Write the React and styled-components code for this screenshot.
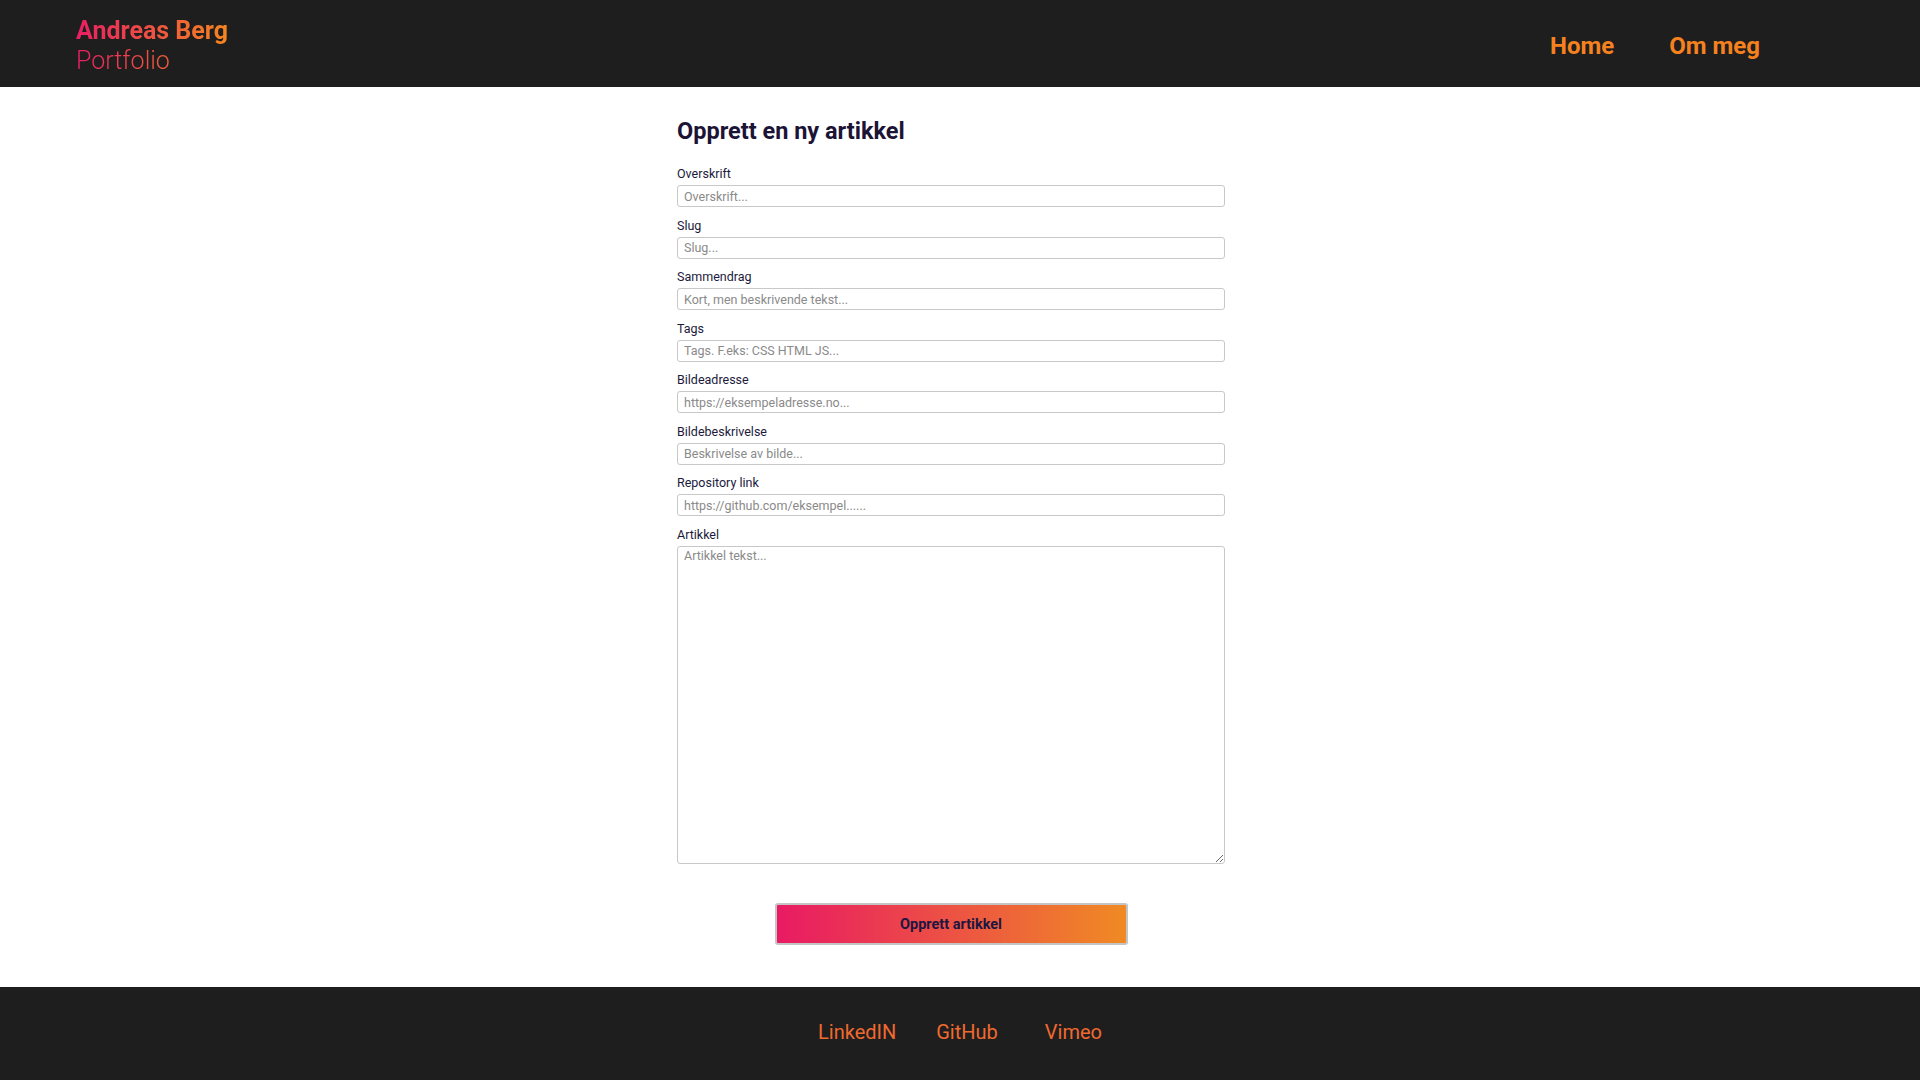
import React from "react";
import styled, { createGlobalStyle } from "styled-components";

const GlobalStyle = createGlobalStyle`
  html, body { margin: 0; padding: 0; background: #ffffff; }
  body { font-family: Roboto, "Liberation Sans", Arial, sans-serif; }
  * { box-sizing: border-box; }
`;

const Page = styled.div`
  min-height: 100vh;
  display: flex;
  flex-direction: column;
`;

const Header = styled.header`
  height: 87px;
  background: #1e1e1e;
  display: flex;
  align-items: flex-start;
  justify-content: space-between;
  padding: 0 160px 0 76px;
`;

const Brand = styled.a`
  display: inline-flex;
  flex-direction: column;
  margin-top: 16px;
  text-decoration: none;
  background: linear-gradient(90deg, #e91e63 0%, #f5861f 100%);
  -webkit-background-clip: text;
  background-clip: text;
  color: transparent;
  font-size: 25px;
  line-height: 30px;
`;

const BrandName = styled.span`
  font-weight: 700;
`;

const BrandSub = styled.span`
  font-weight: 300;
`;

const Nav = styled.nav`
  display: flex;
  gap: 55px;
  margin-top: 31px;
`;

const NavLink = styled.a`
  color: #f5821f;
  font-size: 24px;
  font-weight: 700;
  line-height: 30px;
  text-decoration: none;
`;

const Main = styled.main`
  flex: 1;
  display: flex;
  justify-content: center;
  padding: 30px 18px 41px 0;
`;

const Form = styled.form`
  width: 548px;
  display: flex;
  flex-direction: column;
`;

const Title = styled.h1`
  margin: 0 0 22px;
  font-size: 23.5px;
  line-height: 28px;
  font-weight: 700;
  color: #1c1435;
`;

const Field = styled.div`
  display: flex;
  flex-direction: column;
  gap: 4px;
  margin-bottom: 11.5px;
`;

const Label = styled.label`
  font-size: 12.5px;
  line-height: 14px;
  color: #1c1a3c;
`;

const inputBase = `
  width: 100%;
  font-family: Roboto, "Liberation Sans", Arial, sans-serif;
  font-size: 12.5px;
  color: #222;
  border: 1px solid #c8c8c8;
  border-radius: 3px;
  padding: 0 6px;
  background: #fff;
  outline: none;
  &::placeholder { color: #8a8a8a; }
`;

const Input = styled.input`
  ${inputBase}
  height: 22px;
`;

const TextArea = styled.textarea`
  ${inputBase}
  height: 318px;
  padding: 2px 6px;
  line-height: 14px;
  resize: both;
`;

const ButtonRow = styled.div`
  display: flex;
  justify-content: center;
  margin-top: 28px;
`;

const SubmitButton = styled.button`
  width: 353px;
  height: 42px;
  border: 2px solid #c4c4c4;
  border-radius: 3px;
  background: linear-gradient(90deg, #e91a63 0%, #f08a24 100%);
  color: #1d1640;
  font-family: Roboto, "Liberation Sans", Arial, sans-serif;
  font-size: 14.5px;
  font-weight: 700;
  cursor: pointer;
`;

const Footer = styled.footer`
  height: 93px;
  background: #1e1e1e;
  display: flex;
  align-items: center;
  justify-content: center;
  gap: 40px;
  padding-bottom: 4px;
`;

const FooterLink = styled.a`
  color: #f0692f;
  font-size: 20px;
  font-weight: 400;
  text-decoration: none;
  margin-left: ${(p) => (p.$extra ? "7px" : "0")};
`;

const fields = [
  { id: "title", label: "Overskrift", placeholder: "Overskrift..." },
  { id: "slug", label: "Slug", placeholder: "Slug..." },
  { id: "summary", label: "Sammendrag", placeholder: "Kort, men beskrivende tekst..." },
  { id: "tags", label: "Tags", placeholder: "Tags. F.eks: CSS HTML JS..." },
  { id: "image", label: "Bildeadresse", placeholder: "https://eksempeladresse.no..." },
  { id: "imagealt", label: "Bildebeskrivelse", placeholder: "Beskrivelse av bilde..." },
  { id: "repo", label: "Repository link", placeholder: "https://github.com/eksempel......" },
];

export default function App() {
  return (
    <Page>
      <GlobalStyle />
      <Header>
        <Brand href="#">
          <BrandName>Andreas Berg</BrandName>
          <BrandSub>Portfolio</BrandSub>
        </Brand>
        <Nav>
          <NavLink href="#">Home</NavLink>
          <NavLink href="#">Om meg</NavLink>
        </Nav>
      </Header>
      <Main>
        <Form onSubmit={(e) => e.preventDefault()}>
          <Title>Opprett en ny artikkel</Title>
          {fields.map((f) => (
            <Field key={f.id}>
              <Label htmlFor={f.id}>{f.label}</Label>
              <Input id={f.id} placeholder={f.placeholder} />
            </Field>
          ))}
          <Field>
            <Label htmlFor="body">Artikkel</Label>
            <TextArea id="body" placeholder="Artikkel tekst..." />
          </Field>
          <ButtonRow>
            <SubmitButton type="submit">Opprett artikkel</SubmitButton>
          </ButtonRow>
        </Form>
      </Main>
      <Footer>
        <FooterLink href="#">LinkedIN</FooterLink>
        <FooterLink href="#">GitHub</FooterLink>
        <FooterLink href="#" $extra>Vimeo</FooterLink>
      </Footer>
    </Page>
  );
}
